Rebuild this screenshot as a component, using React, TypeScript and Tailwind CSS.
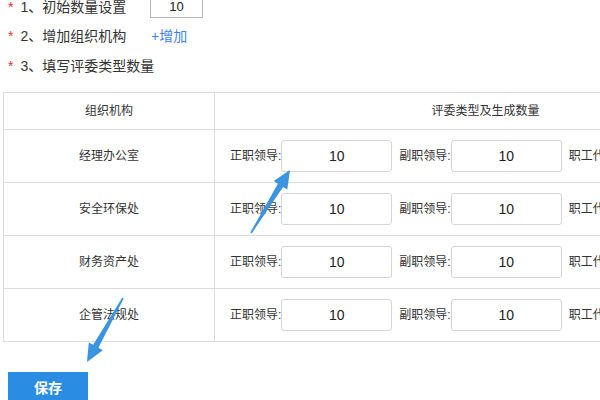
import React from "react";

const rows = ["经理办公室", "安全环保处", "财务资产处", "企管法规处"];

function Field({ label }: { label: string }) {
  return (
    <div className="flex items-center">
      <span className="text-[12px] text-[#333] leading-none">{label}</span>
      <div className="flex h-[32px] w-[111px] items-center justify-center rounded-[3px] border border-[#d4d4d4] bg-white text-[14px] text-[#222]">
        10
      </div>
    </div>
  );
}

export default function App() {
  return (
    <div
      className="relative h-[400px] w-[600px] overflow-hidden bg-white text-[#333]"
      style={{ fontFamily: '"Liberation Sans", "Noto Sans CJK SC", sans-serif' }}
    >
      <div className="mt-[-8px] flex flex-col pl-[8px] text-[14px]">
        <div className="flex h-[30px] items-center">
          <div className="flex w-[142px] items-center">
            <span className="mr-[7px] text-[#e0372f]">*</span>
            <span>1、初始数量设置</span>
          </div>
          <div className="flex h-[21px] w-[53px] items-center justify-center border border-[#b5b5b5] text-[13px] text-[#222]">
            10
          </div>
        </div>
        <div className="flex h-[29px] items-center">
          <div className="flex w-[143px] items-center">
            <span className="mr-[7px] text-[#e0372f]">*</span>
            <span>2、增加组织机构</span>
          </div>
          <span className="text-[#3e7ff6]">+增加</span>
        </div>
        <div className="flex h-[30px] items-center">
          <span className="mr-[7px] text-[#e0372f]">*</span>
          <span>3、填写评委类型数量</span>
        </div>
      </div>

      <table className="ml-[3px] mt-[11px] w-[753px] table-fixed border-collapse text-[12px]">
        <colgroup>
          <col className="w-[211px]" />
          <col className="w-[542px]" />
        </colgroup>
        <thead>
          <tr className="h-[37px]">
            <th className="border border-[#dcdcdc] font-normal">组织机构</th>
            <th className="border border-[#dcdcdc] font-normal">评委类型及生成数量</th>
          </tr>
        </thead>
        <tbody>
          {rows.map((r) => (
            <tr key={r} className="h-[53px]">
              <td className="border border-[#dcdcdc] text-center">{r}</td>
              <td className="border border-[#dcdcdc] pl-[15px]">
                <div className="flex items-center gap-[7px]">
                  <Field label="正职领导:" />
                  <Field label="副职领导:" />
                  <Field label="职工代表:" />
                </div>
              </td>
            </tr>
          ))}
        </tbody>
      </table>

      <div className="ml-[8px] mt-[30px] flex h-[32px] w-[80px] items-center justify-center bg-[#2a8ce2] text-[14px] font-bold text-white">
        保存
      </div>

      <svg className="pointer-events-none absolute left-0 top-0" width="600" height="400" viewBox="0 0 600 400">
        <polygon
          points="251.7,233.4 250.3,232.6 277.9,183.7 273.7,181.1 290,170 287.3,189.5 283.1,186.9"
          fill="#3a94e2"
        />
        <polygon
          points="123.7,298.4 122.3,297.6 93.2,344.8 88.8,342.4 87,362 102.8,350.2 98.4,347.8"
          fill="#3a94e2"
        />
      </svg>
    </div>
  );
}
